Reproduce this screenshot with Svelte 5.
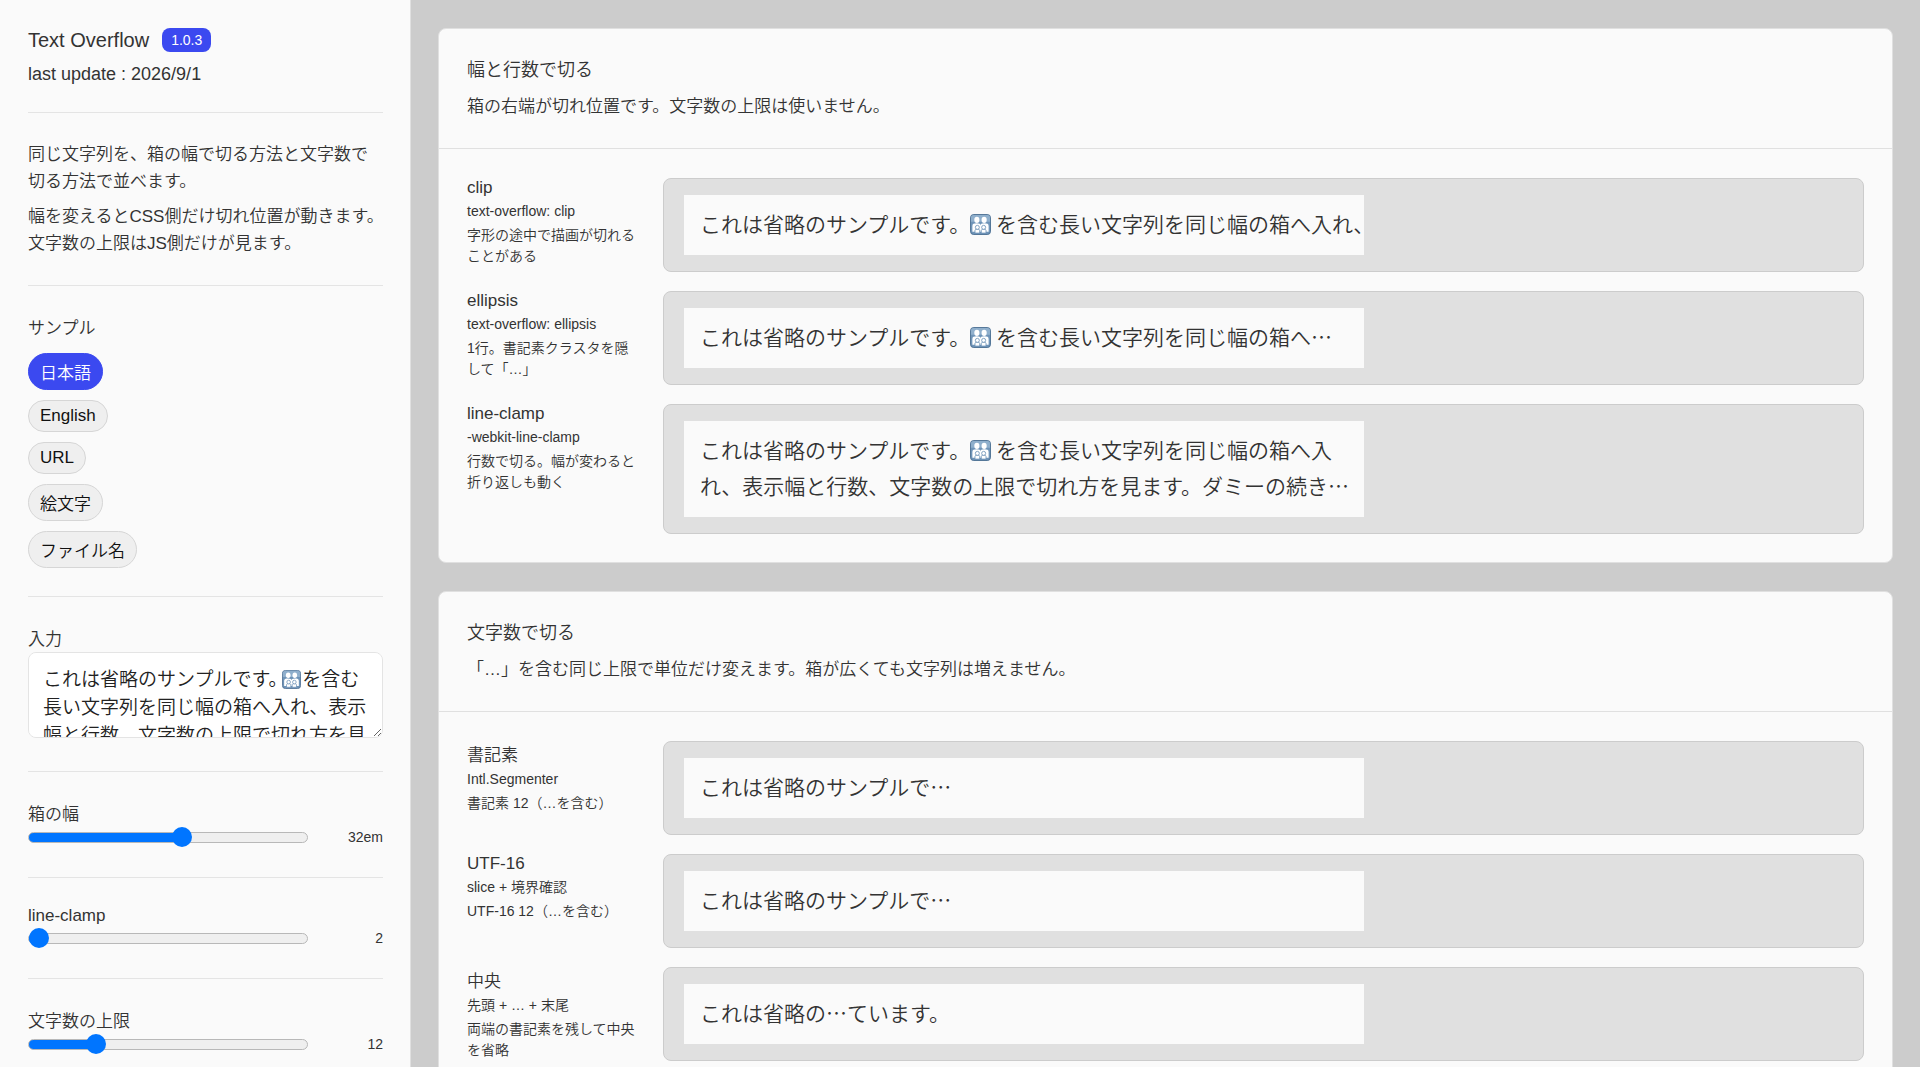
<script lang="ts">
	// full-width slot in the text where the family icon is drawn
	const SLOT = '\u3000';

	const samples = [
		{
			label: '日本語',
			text: `これは省略のサンプルです。${SLOT} を含む長い文字列を同じ幅の箱へ入れ、表示幅と行数、文字数の上限で切れ方を見ます。ダミーの続きの文章が入っています。`
		},
		{ label: 'English', text: 'This is a sample of a long sentence that will be truncated by the width of the box.' },
		{ label: 'URL', text: 'https://example.com/articles/2026/09/01/text-overflow?mode=ellipsis&lines=2' },
		{ label: '絵文字', text: '☀☁☂☃★☆☎☕☘☠☢☮☯☸☹☺' },
		{ label: 'ファイル名', text: 'text-overflow-sample-final-version-2026-09-01.pdf' }
	];

	let current = $state(0);
	let text = $state(samples[0].text);
	let boxWidth = $state(32);
	let lines = $state(2);
	let limit = $state(12);

	let sliders = $derived([
		{ id: 'width', label: '箱の幅', min: 12, max: 48, value: boxWidth, output: `${boxWidth}em`, set: (v: number) => (boxWidth = v) },
		{ id: 'lines', label: 'line-clamp', min: 2, max: 6, value: lines, output: `${lines}`, set: (v: number) => (lines = v) },
		{ id: 'limit', label: '文字数の上限', min: 4, max: 40, value: limit, output: `${limit}`, set: (v: number) => (limit = v) }
	]);

	function segments(value: string) {
		return [...new Intl.Segmenter('ja', { granularity: 'grapheme' }).segment(value)].map((s) => s.segment);
	}

	function cutGraphemes(value: string, max: number) {
		const parts = segments(value);
		return parts.length <= max ? value : parts.slice(0, max - 1).join('') + '…';
	}

	function cutUnits(value: string, max: number) {
		if (value.length <= max) return value;
		let end = max - 1;
		// do not leave half of a surrogate pair
		if (/[\uD800-\uDBFF]/.test(value[end - 1])) end--;
		return value.slice(0, end) + '…';
	}

	function cutMiddle(value: string, max: number) {
		const parts = segments(value);
		if (parts.length <= max) return value;
		const head = Math.ceil((max - 1) / 2);
		const tail = max - 1 - head;
		return parts.slice(0, head).join('') + '…' + parts.slice(parts.length - tail).join('');
	}

	let groups = $derived([
		{
			title: '幅と行数で切る',
			note: '箱の右端が切れ位置です。文字数の上限は使いません。',
			rows: [
				{ name: 'clip', code: 'text-overflow: clip', desc: '字形の途中で描画が切れることがある', kind: 'clip', out: text },
				{ name: 'ellipsis', code: 'text-overflow: ellipsis', desc: '1行。書記素クラスタを隠して「…」', kind: 'ellipsis', out: text },
				{ name: 'line-clamp', code: '-webkit-line-clamp', desc: '行数で切る。幅が変わると折り返しも動く', kind: 'clamp', out: text }
			]
		},
		{
			title: '文字数で切る',
			note: '「…」を含む同じ上限で単位だけ変えます。箱が広くても文字列は増えません。',
			rows: [
				{ name: '書記素', code: 'Intl.Segmenter', desc: `書記素 ${limit}（…を含む）`, kind: 'clip', out: cutGraphemes(text, limit) },
				{ name: 'UTF-16', code: 'slice + 境界確認', desc: `UTF-16 ${limit}（…を含む）`, kind: 'clip', out: cutUnits(text, limit) },
				{ name: '中央', code: '先頭 + … + 末尾', desc: '両端の書記素を残して中央を省略', kind: 'clip', out: cutMiddle(text, limit) }
			]
		}
	]);

	function selectSample(i: number) {
		current = i;
		text = samples[i].text;
	}
</script>

{#snippet family()}
	<svg class="family" viewBox="0 0 22 22" aria-hidden="true">
		<rect x="0.5" y="0.5" width="21" height="21" rx="3.5" fill="#6f94b8" stroke="#4f7194" />
		<path d="M1 8V4a3 3 0 0 1 3-3h14a3 3 0 0 1 3 3v4z" fill="#8fafcc" />
		<g fill="#fff">
			<ellipse cx="7.200" cy="6.200" rx="2.700" ry="3.200" />
			<ellipse cx="14.800" cy="6.200" rx="2.700" ry="3.200" />
			<path d="M2.500 18.500V12.500C2.500 10.500 4 9.800 7 9.800s4 .9 4 2.200c0-1.300 1-2.200 4-2.200s4.500.7 4.500 2.700v6z" />
		</g>
		<g fill="#fff" stroke="#6f94b8" stroke-width="0.9">
			<path d="M5.200 20v-2.500c0-1.200.8-1.700 2.500-1.700s2.500.5 2.500 1.700V20zM11.800 20v-2.500c0-1.200.8-1.700 2.500-1.700s2.500.5 2.500 1.700V20z" />
			<circle cx="7.700" cy="14" r="2.100" />
			<circle cx="14.300" cy="14" r="2.100" />
		</g>
	</svg>
{/snippet}

<div class="layout">
	<aside>
		<section class="head">
			<div class="title">
				<h1>Text Overflow</h1>
				<span class="version">1.0.3</span>
			</div>
			<p class="update">last update : 2026/9/1</p>
		</section>

		<section class="intro">
			<p>同じ文字列を、箱の幅で切る方法と文字数で<br />切る方法で並べます。</p>
			<p>幅を変えるとCSS側だけ切れ位置が動きます。文字数の上限はJS側だけが見ます。</p>
		</section>

		<section>
			<div class="label" id="sample-label">サンプル</div>
			<div class="samples" role="group" aria-labelledby="sample-label">
				{#each samples as s, i}
					<button type="button" class:active={current === i} onclick={() => selectSample(i)}>{s.label}</button>
				{/each}
			</div>
		</section>

		<section>
			<label class="label" for="input">入力</label>
			<div class="field">
				<textarea id="input" bind:value={text} spellcheck="false"></textarea>
				{#if current === 0}
					<span class="mark">{@render family()}</span>
				{/if}
			</div>
		</section>

		{#each sliders as s}
			<section>
				<label class="label" for={s.id}>{s.label}</label>
				<div class="slider">
					<input
						type="range"
						id={s.id}
						min={s.min}
						max={s.max}
						value={s.value}
						style="--fill: {(s.value - s.min) / (s.max - s.min)}"
						oninput={(e) => s.set(Number(e.currentTarget.value))}
					/>
					<output for={s.id}>{s.output}</output>
				</div>
			</section>
		{/each}
	</aside>

	<main>
		{#each groups as g}
			<article>
				<header>
					<h2>{g.title}</h2>
					<p>{g.note}</p>
				</header>
				<div class="rows">
					{#each g.rows as row}
						<div class="row">
							<div class="info">
								<h3>{row.name}</h3>
								<div class="code">{row.code}</div>
								<p>{row.desc}</p>
							</div>
							<div class="stage">
								<div class="box" style="--size: {boxWidth}em">
									<div class="out {row.kind}" style="--lines: {lines}">
										{#each row.out.split(SLOT) as part, i}{#if i > 0}{@render family()}{/if}{part}{/each}
									</div>
								</div>
							</div>
						</div>
					{/each}
				</div>
			</article>
		{/each}
	</main>
</div>

<style>
	:global(body) {
		margin: 0;
		background: #ccc;
	}

	.layout {
		display: flex;
		height: 100vh;
		font-family: 'Liberation Sans', 'Noto Sans CJK JP', sans-serif;
		font-size: 17px;
		font-weight: 350;
		color: #333;
	}

	h1, h2, h3, p {
		margin: 0;
		font-weight: inherit;
	}

	aside, main {
		box-sizing: border-box;
		overflow-y: auto;
		scrollbar-width: none;
	}

	aside {
		flex: 0 0 411px;
		padding: 0 27px 0 28px;
		background: #fafafa;
		border-right: 1px solid #e0e0e0;
	}

	section {
		padding: 28px 0;
		border-bottom: 1px solid #e4e4e4;
	}

	.head {
		padding-bottom: 27px;
	}

	.title {
		display: flex;
		align-items: center;
		gap: 13px;
		height: 24px;
	}

	h1 {
		font-size: 20px;
	}

	.version {
		padding: 0 9px;
		border-radius: 8px;
		background: #3b49f0;
		color: #fff;
		font-size: 14px;
		line-height: 24px;
	}

	.update {
		margin-top: 11px;
		font-size: 18px;
		line-height: 22px;
	}

	/* a closing 。 may hang over the right edge */
	.intro p {
		margin-right: -6px;
		line-height: 27px;
	}

	.intro p + p {
		margin-top: 8px;
	}

	.label {
		display: block;
	}

	.samples {
		display: flex;
		flex-direction: column;
		align-items: flex-start;
		gap: 10px;
		margin-top: 14px;
	}

	button {
		padding: 5px 11px;
		border: 1px solid #d6d6d6;
		border-radius: 20px;
		background: #efefef;
		color: #111;
		font: inherit;
		cursor: pointer;
	}

	button.active {
		border-color: #3b49f0;
		background: #3b49f0;
		color: #fff;
	}

	.field {
		position: relative;
		margin: 2px 0 5px;
	}

	textarea {
		display: block;
		box-sizing: border-box;
		width: 100%;
		height: 86px;
		padding: 13px 10px 14px 14px;
		border: 1px solid #e4e4e4;
		border-radius: 8px;
		background: #fff;
		color: #222;
		font-family: inherit;
		font-size: 19px;
		font-weight: inherit;
		line-height: 28px;
		resize: vertical;
		scrollbar-width: none;
	}

	.mark {
		position: absolute;
		top: 18px;
		left: 254px;
		font-size: 19px;
		pointer-events: none;
	}

	.mark .family {
		display: block;
	}

	.family {
		width: 1em;
		height: 1em;
		vertical-align: -3px;
	}

	.slider {
		display: flex;
		align-items: center;
		justify-content: space-between;
		height: 24px;
	}

	.slider output {
		font-size: 14px;
	}

	input[type='range'] {
		appearance: none;
		flex: 0 0 280px;
		height: 20px;
		margin: 0;
		background: none;
	}

	input[type='range']::-webkit-slider-runnable-track {
		box-sizing: border-box;
		height: 11px;
		border: 1px solid #b8b8b8;
		border-radius: 6px;
		background: linear-gradient(#0075ff, #0075ff) 0 0 / calc(10px + (100% - 20px) * var(--fill)) 100% no-repeat border-box #efefef;
	}

	input[type='range']::-webkit-slider-thumb {
		appearance: none;
		width: 20px;
		height: 20px;
		margin-top: -6px;
		border-radius: 50%;
		background: #0075ff;
	}

	main {
		flex: 1;
		min-width: 0;
		padding: 28px 27px;
	}

	article {
		border: 1px solid #e0e0e0;
		border-radius: 8px;
		background: #fafafa;
	}

	article + article {
		margin-top: 28px;
	}

	header {
		padding: 28px;
		border-bottom: 1px solid #e0e0e0;
	}

	h2 {
		font-size: 18px;
		line-height: 27px;
	}

	header p {
		margin-top: 10px;
		line-height: 26px;
	}

	.rows {
		display: flex;
		flex-direction: column;
		gap: 19px;
		padding: 29px 28px 28px;
	}

	.row {
		display: grid;
		grid-template-columns: 172px minmax(0, 1fr);
		gap: 24px;
	}

	h3 {
		font-size: 17px;
	}

	.code {
		margin-top: 3px;
		font-size: 14px;
		line-height: 20px;
	}

	.info p {
		margin-top: 4px;
		font-size: 14px;
		line-height: 21px;
	}

	.stage {
		align-self: start;
		padding: 16px 20px;
		border: 1px solid #ccc;
		border-radius: 8px;
		background: #e0e0e0;
	}

	.box {
		box-sizing: border-box;
		width: calc(var(--size) + 8px);
		max-width: 100%;
		padding: 10px 12px 14px 16px;
		background: #fafafa;
		font-family: 'Noto Sans CJK JP', sans-serif;
		font-size: 21px;
		line-height: 36px;
	}

	.out {
		overflow: hidden;
	}

	.out.clip,
	.out.ellipsis {
		white-space: nowrap;
	}

	/* the clipped line runs up to the edge of the box */
	.out.clip {
		margin-right: -12px;
		text-overflow: clip;
	}

	.out.ellipsis {
		text-overflow: ellipsis;
	}

	.out.clamp {
		display: -webkit-box;
		-webkit-box-orient: vertical;
		-webkit-line-clamp: var(--lines);
		line-clamp: var(--lines);
	}
</style>
